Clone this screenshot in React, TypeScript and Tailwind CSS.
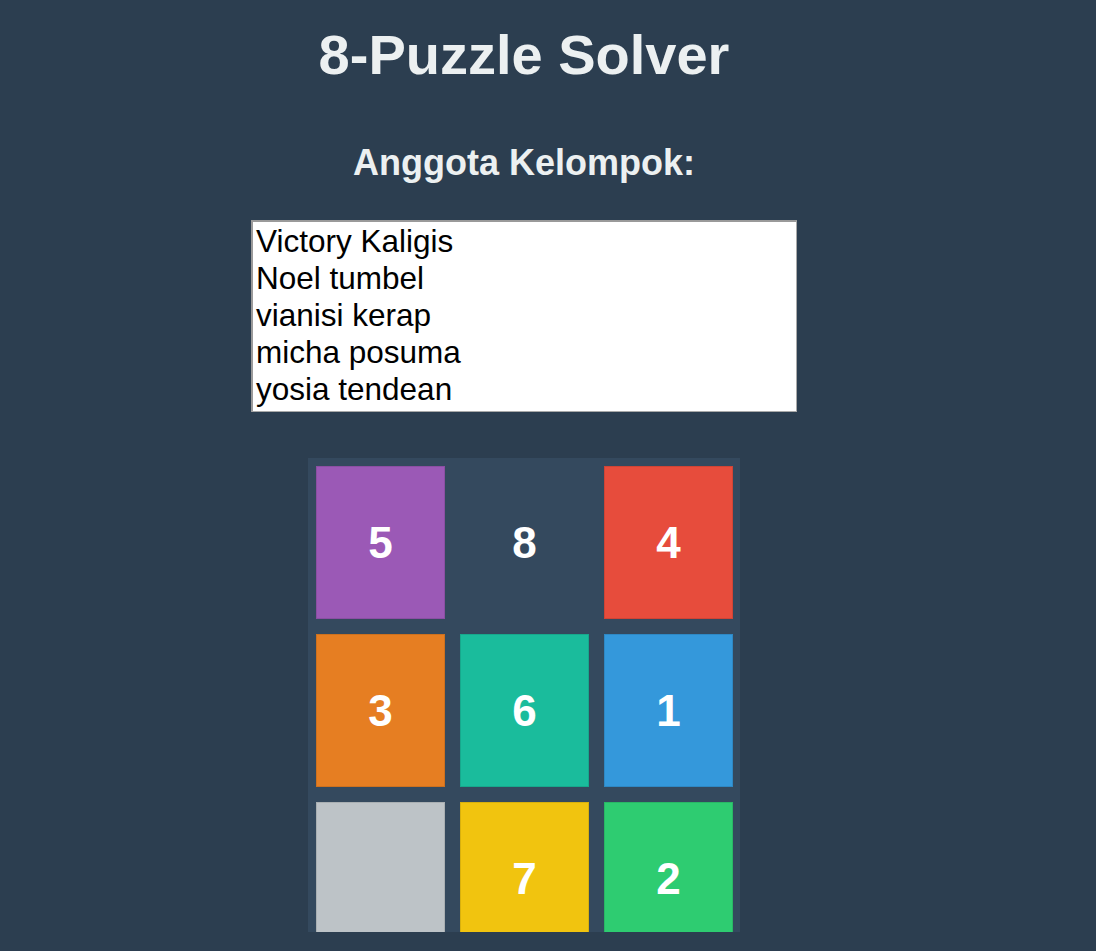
import React from "react";

const tiles = [
  { n: "5", bg: "bg-[#9b59b6]" },
  { n: "8", bg: "bg-[#34495e]" },
  { n: "4", bg: "bg-[#e74c3c]" },
  { n: "3", bg: "bg-[#e67e22]" },
  { n: "6", bg: "bg-[#1abc9c]" },
  { n: "1", bg: "bg-[#3498db]" },
  { n: "", bg: "bg-[#bdc3c7]" },
  { n: "7", bg: "bg-[#f1c40f]" },
  { n: "2", bg: "bg-[#2ecc71]" },
];

const members = "Victory Kaligis\nNoel tumbel\nvianisi kerap\nmicha posuma\nyosia tendean";

export default function App() {
  return (
    <div className="min-h-screen bg-[#2c3e50] font-['Liberation_Sans',Arial,sans-serif]">
      <div className="w-[1048px] flex flex-col items-center">
        <h1 className="mt-[23px] text-[56px] leading-[64px] font-bold text-[#ecf0f1]">
          8-Puzzle Solver
        </h1>
        <h3 className="mt-[57px] text-[36px] leading-[38px] font-bold text-[#ecf0f1]">
          Anggota Kelompok:
        </h3>
        <textarea
          readOnly
          value={members}
          className="mt-[38px] w-[546px] h-[192px] resize-none bg-white text-black text-[31.5px] leading-[37px] px-[3px] py-[1px] border border-[#a9a9a9] border-t-2 border-l-2 border-t-[#9a9a9a] border-l-[#9a9a9a] outline-none overflow-hidden font-['Liberation_Sans',Arial,sans-serif]"
        />
        <div className="mt-[46px] h-[474px] overflow-hidden bg-[#34495e] pt-[8px] pl-[8px] pr-[7px]">
          <div className="grid grid-cols-[129px_129px_129px] gap-[15px]">
            {tiles.map((t, i) => (
              <div
                key={i}
                className={`${t.bg} h-[153px] flex items-center justify-center text-white text-[44px] font-bold ${t.n === "8" ? "" : "border border-black/10"}`}
              >
                {t.n}
              </div>
            ))}
          </div>
        </div>
      </div>
    </div>
  );
}
